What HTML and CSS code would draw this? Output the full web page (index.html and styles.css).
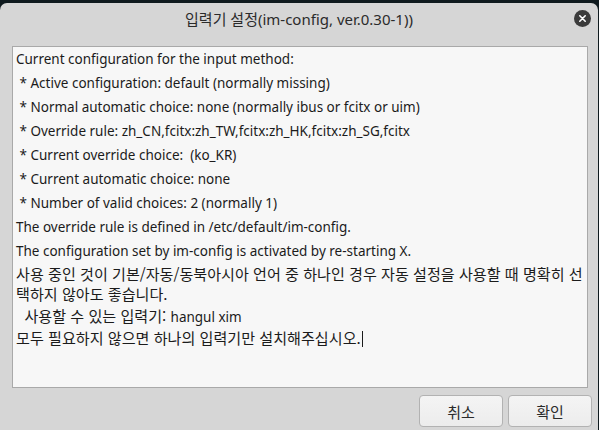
FILE: index.html
```html
<!DOCTYPE html>
<html lang="ko">
<head>
<meta charset="utf-8">
<link rel="stylesheet" href="styles.css">
</head>
<body>
<div class="window">
  <div class="titlebar">
    <div class="title">입력기 설정(im-config, ver.0.30-1))</div>
    <div class="close">
      <svg width="17" height="17" viewBox="0 0 17 17"><circle cx="8.5" cy="8.5" r="8.5" fill="#3b3b3b"/><path d="M5.8 5.8L11.2 11.2M11.2 5.8L5.8 11.2" stroke="#ffffff" stroke-width="1.6" stroke-linecap="round"/></svg>
    </div>
  </div>
  <div class="content">
    <div class="textview">
      <p>Current configuration for the input method:</p>
      <p>&nbsp;* Active configuration: default (normally missing)</p>
      <p>&nbsp;* Normal automatic choice: none (normally ibus or fcitx or uim)</p>
      <p>&nbsp;* Override rule: zh_CN,fcitx:zh_TW,fcitx:zh_HK,fcitx:zh_SG,fcitx</p>
      <p>&nbsp;* Current override choice: &nbsp;(ko_KR)</p>
      <p>&nbsp;* Current automatic choice: none</p>
      <p>&nbsp;* Number of valid choices: 2 (normally 1)</p>
      <p>The override rule is defined in /etc/default/im-config.</p>
      <p>The configuration set by im-config is activated by re-starting X.</p>
      <p class="ko">사용 중인 것이 기본/자동/동북아시아 언어 중 하나인 경우 자동 설정을 사용할 때 명확히 선택하지 않아도 좋습니다.</p>
      <p class="ko">&nbsp;&nbsp;사용할 수 있는 입력기: <span class="lat">hangul xim</span></p>
      <p class="ko">모두 필요하지 않으면 하나의 입력기만 설치해주십시오.<span class="caret"></span></p>
    </div>
    <div class="buttons">
      <button class="btn">취소</button>
      <button class="btn">확인</button>
    </div>
  </div>
</div>
</body>
</html>
```

FILE: styles.css
```css
html, body {
  margin: 0;
  padding: 0;
  width: 599px;
  height: 430px;
  overflow: hidden;
  background: #0f1a1e;
  font-family: "Noto Sans", "Noto Sans CJK KR", sans-serif;
}
.window {
  margin-top: 3px;
  margin-right: 1px;
  height: 427px;
  background: #d6d6d6;
  border-radius: 7px 7px 0 0;
  display: flex;
  flex-direction: column;
}
.titlebar {
  height: 32px;
  display: flex;
  align-items: center;
  justify-content: center;
  position: relative;
}
.title {
  font-size: 15px;
  color: #2b2b2b;
  margin-top: -1px;
}
.close {
  position: absolute;
  right: 7px;
  top: 7px;
  width: 17px;
  height: 17px;
}
.close svg { display: block; }
.content {
  flex: 1;
  display: flex;
  flex-direction: column;
  padding: 11px 6px 3px 12px;
}
.textview {
  height: 342px;
  margin-right: 4px;
  box-sizing: border-box;
  background: #f7f7f7;
  border: 1px solid #a9a9a9;
  padding: 2px 0 0 3px;
  color: #1b1b1b;
  font-size: 13.5px;
}
.textview p {
  margin: 0 0 4px 0;
  line-height: 20px;
  white-space: pre-wrap;
}
.textview p.ko {
  font-family: "Noto Sans CJK KR", "Noto Sans", sans-serif;
  font-size: 15.1px;
  line-break: anywhere;
  word-break: break-all;
  margin-top: -2px;
}
.textview p.ko .lat {
  font-family: "Noto Sans", sans-serif;
  font-size: 13.5px;
  line-height: 14px;
}
.caret {
  display: inline-block;
  width: 1px;
  height: 16px;
  background: #1b1b1b;
  vertical-align: -3px;
  margin-left: 1px;
}
.buttons {
  display: flex;
  justify-content: flex-end;
  gap: 5px;
  margin-top: 7px;
}
.btn {
  width: 84px;
  height: 32px;
  box-sizing: border-box;
  border: 1px solid #b2b2b2;
  border-radius: 4px;
  background: linear-gradient(#f4f4f4, #ececec);
  font-family: "Noto Sans CJK KR", "Noto Sans", sans-serif;
  font-size: 15px;
  color: #2b2b2b;
  padding: 0;
}
```
